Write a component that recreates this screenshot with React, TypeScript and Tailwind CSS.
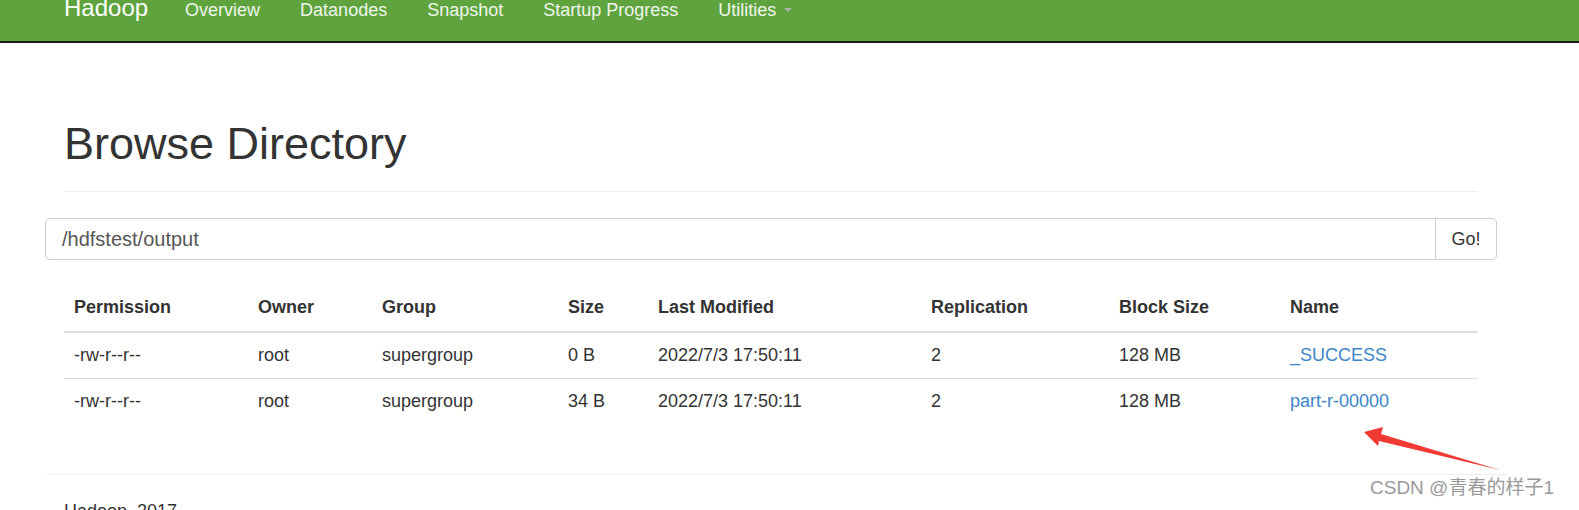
import React from "react";

const font = "font-['Liberation_Sans',Arial,sans-serif]";

const columns = [
  { label: "Permission", w: "w-[184px]" },
  { label: "Owner", w: "w-[124px]" },
  { label: "Group", w: "w-[186px]" },
  { label: "Size", w: "w-[90px]" },
  { label: "Last Modified", w: "w-[273px]" },
  { label: "Replication", w: "w-[188px]" },
  { label: "Block Size", w: "w-[171px]" },
  { label: "Name", w: "w-[198px]" },
];

const files = [
  { perm: "-rw-r--r--", owner: "root", group: "supergroup", size: "0 B", modified: "2022/7/3 17:50:11", repl: "2", block: "128 MB", name: "_SUCCESS" },
  { perm: "-rw-r--r--", owner: "root", group: "supergroup", size: "34 B", modified: "2022/7/3 17:50:11", repl: "2", block: "128 MB", name: "part-r-00000" },
];

const navLinks = ["Overview", "Datanodes", "Snapshot", "Startup Progress"];

export default function App() {
  return (
    <div className={`relative min-h-[510px] w-[1579px] overflow-hidden bg-white text-[#333] ${font}`}>
      {/* top bar */}
      <nav className="flex items-start h-[43px] bg-[#5fa33e] border-b-2 border-[#1c1c1c]">
        <div className="flex items-baseline pl-[64px] -mt-[4px]">
          <span className="text-[24px] leading-[24px] text-white mr-[37px]">Hadoop</span>
          <div className="flex items-baseline gap-[40px] text-[18px] leading-[24px] text-white/90">
            {navLinks.map((l) => (
              <span key={l}>{l}</span>
            ))}
            <span className="flex items-baseline">
              Utilities
              <span className="ml-[8px] inline-block w-0 h-0 border-l-[4px] border-r-[4px] border-t-[4px] border-l-transparent border-r-transparent border-t-[#a9b3a4] -translate-y-[4px]" />
            </span>
          </div>
        </div>
      </nav>

      <main className="ml-[45px] w-[1462px]">
        <h1 className="mt-[76px] ml-[19px] text-[45px] leading-[49.5px] font-normal text-[#333]">Browse Directory</h1>
        <div className="mt-[22.5px] ml-[19px] w-[1414px] border-t border-[#eee]" />

        {/* path input */}
        <div className="mt-[26px] flex w-[1452px] h-[42px]">
          <div className="flex-1 flex items-center pl-[16px] border border-[#ccc] rounded-l-[5px] text-[20px] text-[#555]">
            /hdfstest/output
          </div>
          <div className="w-[61px] flex items-center justify-center border border-l-0 border-[#ccc] rounded-r-[5px] text-[18px] text-[#333]">
            Go!
          </div>
        </div>

        {/* listing */}
        <table className="mt-[25px] ml-[19px] w-[1414px] table-fixed border-collapse text-[18px] leading-[25px]">
          <colgroup>
            {columns.map((c) => (
              <col key={c.label} className={c.w} />
            ))}
          </colgroup>
          <thead>
            <tr>
              {columns.map((c) => (
                <th key={c.label} className="text-left font-bold px-[10px] pt-[10px] pb-[10.5px] border-b-2 border-[#ddd]">
                  {c.label}
                </th>
              ))}
            </tr>
          </thead>
          <tbody>
            {files.map((f, i) => (
              <tr key={f.name} className={i === 0 ? "border-b border-[#ddd]" : ""}>
                <td className="px-[10px] py-[10px]">{f.perm}</td>
                <td className="px-[10px] py-[10px]">{f.owner}</td>
                <td className="px-[10px] py-[10px]">{f.group}</td>
                <td className="px-[10px] py-[10px]">{f.size}</td>
                <td className="px-[10px] py-[10px]">{f.modified}</td>
                <td className="px-[10px] py-[10px]">{f.repl}</td>
                <td className="px-[10px] py-[10px]">{f.block}</td>
                <td className="px-[10px] py-[10px]">
                  <a className="text-[#3a86c8]">{f.name}</a>
                </td>
              </tr>
            ))}
          </tbody>
        </table>

        <div className="mt-[50px] w-[1462px] border-t border-[#eee]" />
        <p className="mt-[24px] ml-[19px] text-[18px] leading-[25px]">Hadoop, 2017.</p>
      </main>

      {/* annotation arrow */}
      <svg className="absolute left-0 top-0 pointer-events-none" width="1579" height="510">
        <polygon
          points="1364,432 1383,427 1381,434 1500,470 1379,441 1378,446"
          fill="#f23a34"
        />
      </svg>

      {/* watermark */}
      <div className="absolute left-[1370px] top-[476px] text-[19px] leading-[24px] text-[#9a9a9a] font-['Liberation_Sans','Noto_Sans_CJK_SC',sans-serif] whitespace-nowrap">
        CSDN @青春的样子1
      </div>
    </div>
  );
}
